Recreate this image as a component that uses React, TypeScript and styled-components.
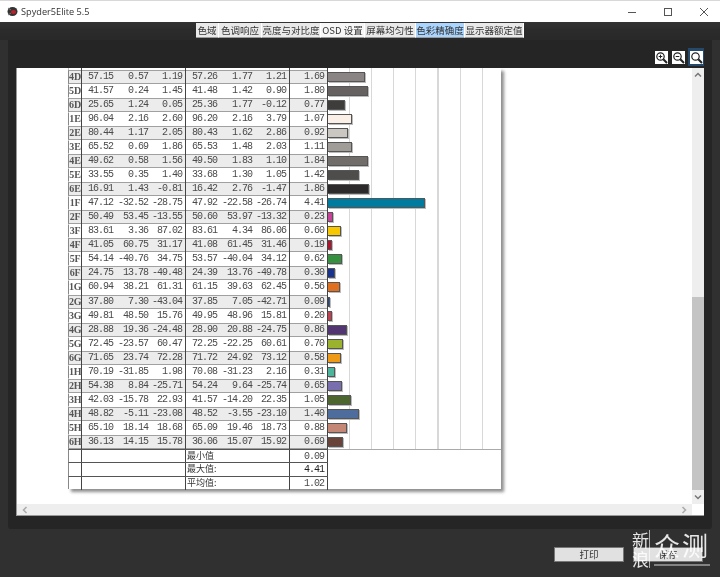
import React from 'react';
import styled, { createGlobalStyle } from 'styled-components';

const Global = createGlobalStyle`
  html, body { margin: 0; padding: 0; overflow: hidden; background: #303030; }
  * { box-sizing: border-box; }
`;

const Win = styled.div`
  width: 720px;
  height: 577px;
  display: flex;
  flex-direction: column;
  position: relative;
  overflow: hidden;
  background: #303030;
  font-family: "Noto Sans CJK SC", "Liberation Sans", sans-serif;
`;

const TitleBar = styled.div`
  height: 22px;
  flex: none;
  background: #fff;
  border-top: 1px solid #d8d8d8;
  display: flex;
  align-items: center;
  padding-left: 7px;
  gap: 3px;
  font-family: "Open Sans", "Liberation Sans", sans-serif;
  font-size: 9.2px;
  color: #333;
  filter: blur(0.3px);
`;

const TitleText = styled.span`
  flex: 1;
`;

const WinBtn = styled.div`
  width: 33px;
  display: flex;
  justify-content: center;
  color: #555;
`;

const TabRow = styled.div`
  height: 18px;
  flex: none;
  display: flex;
  padding: 1px 0 0 196px;
  background: linear-gradient(#333 0, #2b2b2b 8px, #292929 100%);
`;

const Tab = styled.div<{ $w: number; $active?: boolean; $light?: boolean }>`
  width: ${p => p.$w}px;
  height: 15px;
  display: flex;
  align-items: center;
  justify-content: center;
  font-size: 9.5px;
  white-space: nowrap;
  color: #333;
  background: ${p => (p.$active ? '#a9d5ff' : p.$light ? '#f6f6f6' : '#e9e9e9')};
  border-bottom: 1px solid #9a9a9a;
  border-right: 1px solid #fff;
  filter: blur(0.4px);
`;

const Panel = styled.div`
  height: 489px;
  flex: none;
  margin: 0 8px;
  background: #252525;
  border-radius: 0 0 3px 3px;
  padding: 0 8px 13px;
  display: flex;
  flex-direction: column;
`;

const ZoomBar = styled.div`
  height: 28px;
  flex: none;
  display: flex;
  justify-content: flex-end;
  align-items: flex-start;
  padding-top: 9px;
  gap: 3px;
`;

const ZoomBtn = styled.div<{ $active?: boolean }>`
  width: ${p => (p.$active ? 16 : 14)}px;
  height: ${p => (p.$active ? 18 : 16)}px;
  margin-top: ${p => (p.$active ? -1 : 0)}px;
  display: flex;
  align-items: center;
  justify-content: center;
  background: ${p => (p.$active ? '#24496b' : 'transparent')};
`;

const Viewport = styled.div`
  flex: 1;
  min-height: 0;
  background: #fff;
  border-left: 1px solid #999;
  border-bottom: 1px solid #999;
  display: flex;
  flex-direction: column;
`;

const ViewTop = styled.div`
  flex: 1;
  min-height: 0;
  display: flex;
`;

const Scroller = styled.div`
  flex: 1;
  overflow: hidden;
  padding-left: 51px;
`;

const Sheet = styled.div`
  width: 433px;
  box-shadow: 3px 3px 3px #8f8f8f;
  background: #fff;
  filter: blur(0.45px);
`;

const Row = styled.div`
  display: flex;
  height: 14.04px;
`;

// the row above 4D, scrolled almost out of view
const CutRow = styled(Row)`
  height: 2px;
  overflow: hidden;
`;

const Values = styled.div<{ $shade: boolean }>`
  width: 260px;
  flex: none;
  display: grid;
  grid-template-columns: 13px 32px 35px 37px 32px 35px 37px 38px;
  background: ${p => (p.$shade ? '#ececec' : '#fff')};
  border-left: 1px solid #888;
  border-top: 1px solid ${p => (p.$shade ? '#a0a0a0' : '#fff')};
  border-bottom: 1px solid ${p => (p.$shade ? '#a0a0a0' : '#fff')};
`;

const IdCell = styled.div`
  border-right: 1px solid #444;
  margin: -1px 0;
  font: bold 10px/14px "Liberation Serif", serif;
  color: #555;
  text-align: center;
  letter-spacing: -0.2px;
`;

const Num = styled.div<{ $end?: boolean }>`
  margin: -1px 0;
  text-align: right;
  padding-right: ${p => (p.$end ? 3 : 1)}px;
  font: 10px/14px "Liberation Mono", monospace;
  letter-spacing: -1px;
  color: #4a4a4a;
  white-space: nowrap;
  border-right: ${p => (p.$end ? '1px solid #444' : 'none')};
`;

const Chart = styled.div`
  flex: 1;
  display: flex;
  align-items: center;
  background: repeating-linear-gradient(to right, transparent 0 21px, #d8d8d8 21px 22.1px);
`;

const Bar = styled.div<{ $color: string }>`
  height: 10px;
  background: ${p => p.$color};
  border: 1px solid #555;
  border-left: none;
  box-shadow: 1px 1px 0 #bbb;
`;

const FootRow = styled.div`
  display: flex;
  height: 13.4px;
`;

const FootCells = styled.div`
  width: 260px;
  flex: none;
  display: grid;
  grid-template-columns: 13px 104px 104px 38px;
  border-left: 1px solid #888;
  border-top: 1px solid #555;
`;

const FootCell = styled.div`
  border-right: 1px solid #444;
  font-size: 9px;
  line-height: 12px;
  color: #333;
  padding-left: 1px;
`;

const FootVal = styled(FootCell)<{ $strong?: boolean }>`
  font: 10px/13px "Liberation Mono", monospace;
  letter-spacing: -1px;
  text-align: right;
  padding-right: 3px;
  color: ${p => (p.$strong ? '#222' : '#4a4a4a')};
`;

const FootChart = styled.div<{ $first: boolean }>`
  flex: 1;
  border-top: ${p => (p.$first ? '1px solid #aaa' : 'none')};
`;

const VScroll = styled.div`
  width: 12px;
  flex: none;
  background: #eee;
  display: flex;
  flex-direction: column;
  align-items: center;
  color: #777;
`;

const Arrow = styled.div`
  height: 14px;
  flex: none;
  display: flex;
  align-items: center;
  justify-content: center;
`;

const VTrack = styled.div`
  flex: 1;
  width: 100%;
  display: flex;
  flex-direction: column;
  justify-content: flex-end;
`;

const VThumb = styled.div`
  height: 193px;
  background: #c4c4c4;
`;

const HScroll = styled.div`
  height: 11px;
  flex: none;
  display: flex;
`;

const HTrack = styled.div`
  flex: 1;
  background: #eee;
  display: flex;
  align-items: center;
  justify-content: space-between;
  padding: 0 4px;
  color: #aaa;
`;

const Corner = styled.div`
  width: 12px;
  background: #fff;
`;

const Footer = styled.div`
  flex: 1;
  display: flex;
  justify-content: flex-end;
  align-items: flex-start;
  gap: 9px;
  padding: 18px 17px 0 0;
`;

const Btn = styled.div`
  width: 70px;
  height: 15px;
  background: #e1e1e1;
  border: 1px solid #777;
  color: #333;
  font-size: 9.5px;
  line-height: 13px;
  text-align: center;
  filter: blur(0.3px);
`;

const Watermark = styled.div`
  position: absolute;
  left: 632px;
  top: 530px;
  width: 78px;
  height: 38px;
  display: flex;
  color: #fff;
  opacity: 0.88;
`;

const WmSmall = styled.div`
  width: 20px;
  border-right: 1px solid rgba(255, 255, 255, 0.7);
  font-size: 17px;
  line-height: 19px;
  margin-right: 4px;
`;

const WmBig = styled.div`
  flex: 1;
  font-size: 26px;
  line-height: 30px;
  letter-spacing: 2px;
  white-space: nowrap;
  height: 36px;
  border-bottom: 2px solid rgba(255, 255, 255, 0.45);
`;

type Patch = [string, string, string, string, string, string, string, string, string];

const patches: Patch[] = [
  ['4D', '57.15', '0.57', '1.19', '57.26', '1.77', '1.21', '1.69', '#8a8584'],
  ['5D', '41.57', '0.24', '1.45', '41.48', '1.42', '0.90', '1.80', '#666261'],
  ['6D', '25.65', '1.24', '0.05', '25.36', '1.77', '-0.12', '0.77', '#3f3d3c'],
  ['1E', '96.04', '2.16', '2.60', '96.20', '2.16', '3.79', '1.07', '#faf0e8'],
  ['2E', '80.44', '1.17', '2.05', '80.43', '1.62', '2.86', '0.92', '#cac6c2'],
  ['3E', '65.52', '0.69', '1.86', '65.53', '1.48', '2.03', '1.11', '#a09c98'],
  ['4E', '49.62', '0.58', '1.56', '49.50', '1.83', '1.10', '1.84', '#716d6b'],
  ['5E', '33.55', '0.35', '1.40', '33.68', '1.30', '1.05', '1.42', '#4f4d4c'],
  ['6E', '16.91', '1.43', '-0.81', '16.42', '2.76', '-1.47', '1.86', '#2c2a2b'],
  ['1F', '47.12', '-32.52', '-28.75', '47.92', '-22.58', '-26.74', '4.41', '#007ba0'],
  ['2F', '50.49', '53.45', '-13.55', '50.60', '53.97', '-13.32', '0.23', '#c8429a'],
  ['3F', '83.61', '3.36', '87.02', '83.61', '4.34', '86.06', '0.60', '#f7c800'],
  ['4F', '41.05', '60.75', '31.17', '41.08', '61.45', '31.46', '0.19', '#b5112f'],
  ['5F', '54.14', '-40.76', '34.75', '53.57', '-40.04', '34.12', '0.62', '#35903f'],
  ['6F', '24.75', '13.78', '-49.48', '24.39', '13.76', '-49.78', '0.30', '#1a338c'],
  ['1G', '60.94', '38.21', '61.31', '61.15', '39.63', '62.45', '0.56', '#e0701f'],
  ['2G', '37.80', '7.30', '-43.04', '37.85', '7.05', '-42.71', '0.09', '#27458c'],
  ['3G', '49.81', '48.50', '15.76', '49.95', '48.96', '15.81', '0.20', '#c23f50'],
  ['4G', '28.88', '19.36', '-24.48', '28.90', '20.88', '-24.75', '0.86', '#513671'],
  ['5G', '72.45', '-23.57', '60.47', '72.25', '-22.25', '60.61', '0.70', '#9ab22e'],
  ['6G', '71.65', '23.74', '72.28', '71.72', '24.92', '73.12', '0.58', '#ef9a16'],
  ['1H', '70.19', '-31.85', '1.98', '70.08', '-31.23', '2.16', '0.31', '#4cb59c'],
  ['2H', '54.38', '8.84', '-25.71', '54.24', '9.64', '-25.74', '0.65', '#7a6fae'],
  ['3H', '42.03', '-15.78', '22.93', '41.57', '-14.20', '22.35', '1.05', '#4d6630'],
  ['4H', '48.82', '-5.11', '-23.08', '48.52', '-3.55', '-23.10', '1.40', '#4e6d9c'],
  ['5H', '65.10', '18.14', '18.68', '65.09', '19.46', '18.73', '0.88', '#c48776'],
  ['6H', '36.13', '14.15', '15.78', '36.06', '15.07', '15.92', '0.69', '#68433a'],
];

const tabs = [
  { label: '色域', w: 23 },
  { label: '色调响应', w: 43 },
  { label: '亮度与对比度', w: 59 },
  { label: 'OSD 设置', w: 44, light: true },
  { label: '屏幕均匀性', w: 51 },
  { label: '色彩精确度', w: 49, active: true },
  { label: '显示器额定值', w: 59 },
];

const footer = [
  { label: '最小值', value: '0.09' },
  { label: '最大值:', value: '4.41', strong: true },
  { label: '平均值:', value: '1.02' },
];

const Logo = () => (
  <svg width="11" height="11" viewBox="0 0 11 11">
    <ellipse cx="5.5" cy="5.5" rx="5" ry="4.5" fill="#333" />
    <ellipse cx="6.5" cy="6" rx="2.6" ry="2" fill="#b8222c" />
    <path d="M1 2 L4 4 M1 9 L4 7" stroke="#777" strokeWidth="1" />
  </svg>
);

const Magnifier = ({ mode }: { mode: 'in' | 'out' | 'fit' }) => (
  <svg width="13" height="13" viewBox="0 0 13 13">
    <rect width="13" height="13" fill="#fff" />
    <circle cx="5.5" cy="5.5" r="3.7" fill="none" stroke="#222" strokeWidth="1.2" />
    <path d="M8.3 8.3 L12 12" stroke="#222" strokeWidth="2" />
    {mode !== 'fit' && <path d="M3.7 5.5 H7.3" stroke="#222" strokeWidth="1" />}
    {mode === 'in' && <path d="M5.5 3.7 V7.3" stroke="#222" strokeWidth="1" />}
  </svg>
);

const Chevron = ({ d }: { d: string }) => (
  <svg width="8" height="8" viewBox="0 0 8 8">
    <path d={d} fill="none" stroke="currentColor" strokeWidth="1.5" />
  </svg>
);

const App: React.FC = () => (
  <Win>
    <Global />
    <TitleBar>
      <Logo />
      <TitleText>Spyder5Elite 5.5</TitleText>
      <WinBtn>
        <svg width="10" height="10" viewBox="0 0 10 10"><path d="M1 5.5 H9" stroke="currentColor" /></svg>
      </WinBtn>
      <WinBtn>
        <svg width="10" height="10" viewBox="0 0 10 10"><rect x="1.5" y="1.5" width="7" height="7" fill="none" stroke="currentColor" /></svg>
      </WinBtn>
      <WinBtn>
        <svg width="10" height="10" viewBox="0 0 10 10"><path d="M1 1 L9 9 M9 1 L1 9" stroke="currentColor" /></svg>
      </WinBtn>
    </TitleBar>
    <TabRow>
      {tabs.map(t => (
        <Tab key={t.label} $w={t.w} $active={t.active} $light={t.light}>{t.label}</Tab>
      ))}
    </TabRow>
    <Panel>
      <ZoomBar>
        <ZoomBtn><Magnifier mode="in" /></ZoomBtn>
        <ZoomBtn><Magnifier mode="out" /></ZoomBtn>
        <ZoomBtn $active><Magnifier mode="fit" /></ZoomBtn>
      </ZoomBar>
      <Viewport>
        <ViewTop>
          <Scroller>
            <Sheet>
              <CutRow>
                <Values $shade={false}>
                  <IdCell />
                  <Num />
                  <Num />
                  <Num $end />
                  <Num />
                  <Num />
                  <Num $end />
                  <Num $end />
                </Values>
                <Chart />
              </CutRow>
              {patches.map((p, i) => (
                <Row key={p[0]}>
                  <Values $shade={i % 2 === 0}>
                    <IdCell>{p[0]}</IdCell>
                    <Num>{p[1]}</Num>
                    <Num>{p[2]}</Num>
                    <Num $end>{p[3]}</Num>
                    <Num>{p[4]}</Num>
                    <Num>{p[5]}</Num>
                    <Num $end>{p[6]}</Num>
                    <Num $end>{p[7]}</Num>
                  </Values>
                  <Chart>
                    <Bar $color={p[8]} style={{ width: parseFloat(p[7]) * 22 }} />
                  </Chart>
                </Row>
              ))}
              {footer.map((f, i) => (
                <FootRow key={f.label}>
                  <FootCells>
                    <FootCell />
                    <FootCell />
                    <FootCell>{f.label}</FootCell>
                    <FootVal $strong={f.strong}>{f.value}</FootVal>
                  </FootCells>
                  <FootChart $first={i === 0} />
                </FootRow>
              ))}
            </Sheet>
          </Scroller>
          <VScroll>
            <Arrow><Chevron d="M1 5.5 L4 2.5 L7 5.5" /></Arrow>
            <VTrack><VThumb /></VTrack>
            <Arrow><Chevron d="M1 2.5 L4 5.5 L7 2.5" /></Arrow>
          </VScroll>
        </ViewTop>
        <HScroll>
          <HTrack>
            <Chevron d="M5.5 1 L2.5 4 L5.5 7" />
            <Chevron d="M2.5 1 L5.5 4 L2.5 7" />
          </HTrack>
          <Corner />
        </HScroll>
      </Viewport>
    </Panel>
    <Footer>
      <Btn>打印</Btn>
      <Btn>保存</Btn>
    </Footer>
    <Watermark>
      <WmSmall>新<br />浪</WmSmall>
      <WmBig>众测</WmBig>
    </Watermark>
  </Win>
);

export default App;
